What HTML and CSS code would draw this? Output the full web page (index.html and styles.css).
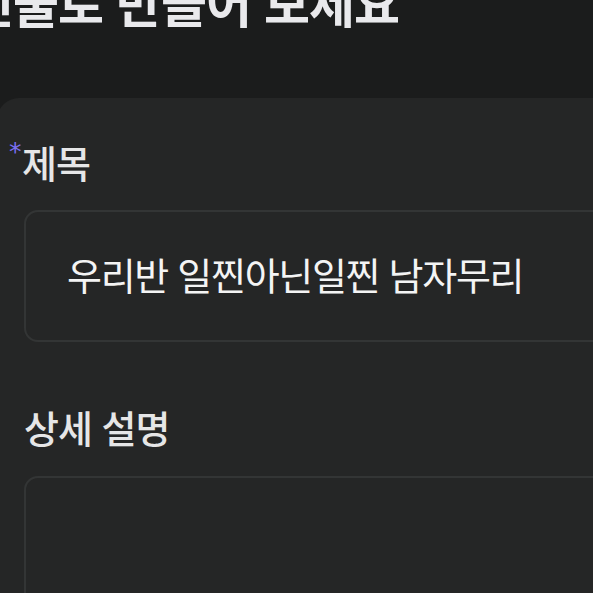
FILE: index.html
```html
<!DOCTYPE html>
<html lang="ko">
<head>
<meta charset="utf-8">
<title>건물 만들기</title>
<link rel="stylesheet" href="styles.css">
</head>
<body>
<header class="top">
  <h1 class="headline">건물로 만들어 보세요</h1>
</header>
<main class="card">
  <section class="field">
    <div class="label"><span class="req">*</span>제목</div>
    <div class="input-box">
      <span class="input-text">우리반 일찐아닌일찐 남자무리</span>
    </div>
  </section>
  <section class="field field-desc">
    <div class="label">상세 설명</div>
    <div class="textarea-box"></div>
  </section>
</main>
</body>
</html>
```

FILE: styles.css
```css
html, body {
  margin: 0;
  padding: 0;
  height: 100%;
  overflow: hidden;
}
body {
  background: #1b1c1c;
  font-family: "Noto Sans CJK KR", "Noto Sans", sans-serif;
  color: #e8e8ea;
}
.top {
  display: flow-root;
  height: 28px;
}
.headline {
  margin: -24px 0 0 -32px;
  font-size: 50px;
  line-height: 50px;
  font-weight: 700;
  color: #e9e9ec;
  white-space: nowrap;
  letter-spacing: -1px;
}
.card {
  margin: 70px 0 0 -3px;
  width: 720px;
  height: 700px;
  background: #252626;
  border-radius: 22px;
  padding: 42px 0 0 27px;
  box-sizing: border-box;
}
.label {
  font-size: 38px;
  line-height: 44px;
  font-weight: 500;
  color: #e6e6e7;
  letter-spacing: -1px;
  white-space: nowrap;
}
.req {
  display: inline-block;
  margin-left: -15px;
  width: 13px;
  font-family: "DejaVu Sans", sans-serif;
  font-size: 25px;
  line-height: 24px;
  vertical-align: top;
  color: #7b6ff2;
  font-weight: 400;
}
.input-box {
  margin-top: 26px;
  height: 132px;
  box-sizing: border-box;
  border: 2px solid #333535;
  border-radius: 14px;
  padding: 0 0 5px 41px;
  display: flex;
  align-items: center;
  width: 680px;
}
.input-text {
  font-size: 38px;
  font-weight: 400;
  color: #f4f4f4;
  letter-spacing: -1.3px;
  white-space: nowrap;
}
.field-desc {
  margin-top: 63px;
}
.textarea-box {
  margin-top: 27px;
  height: 300px;
  box-sizing: border-box;
  border: 2px solid #333535;
  border-radius: 14px;
  width: 680px;
}
```
